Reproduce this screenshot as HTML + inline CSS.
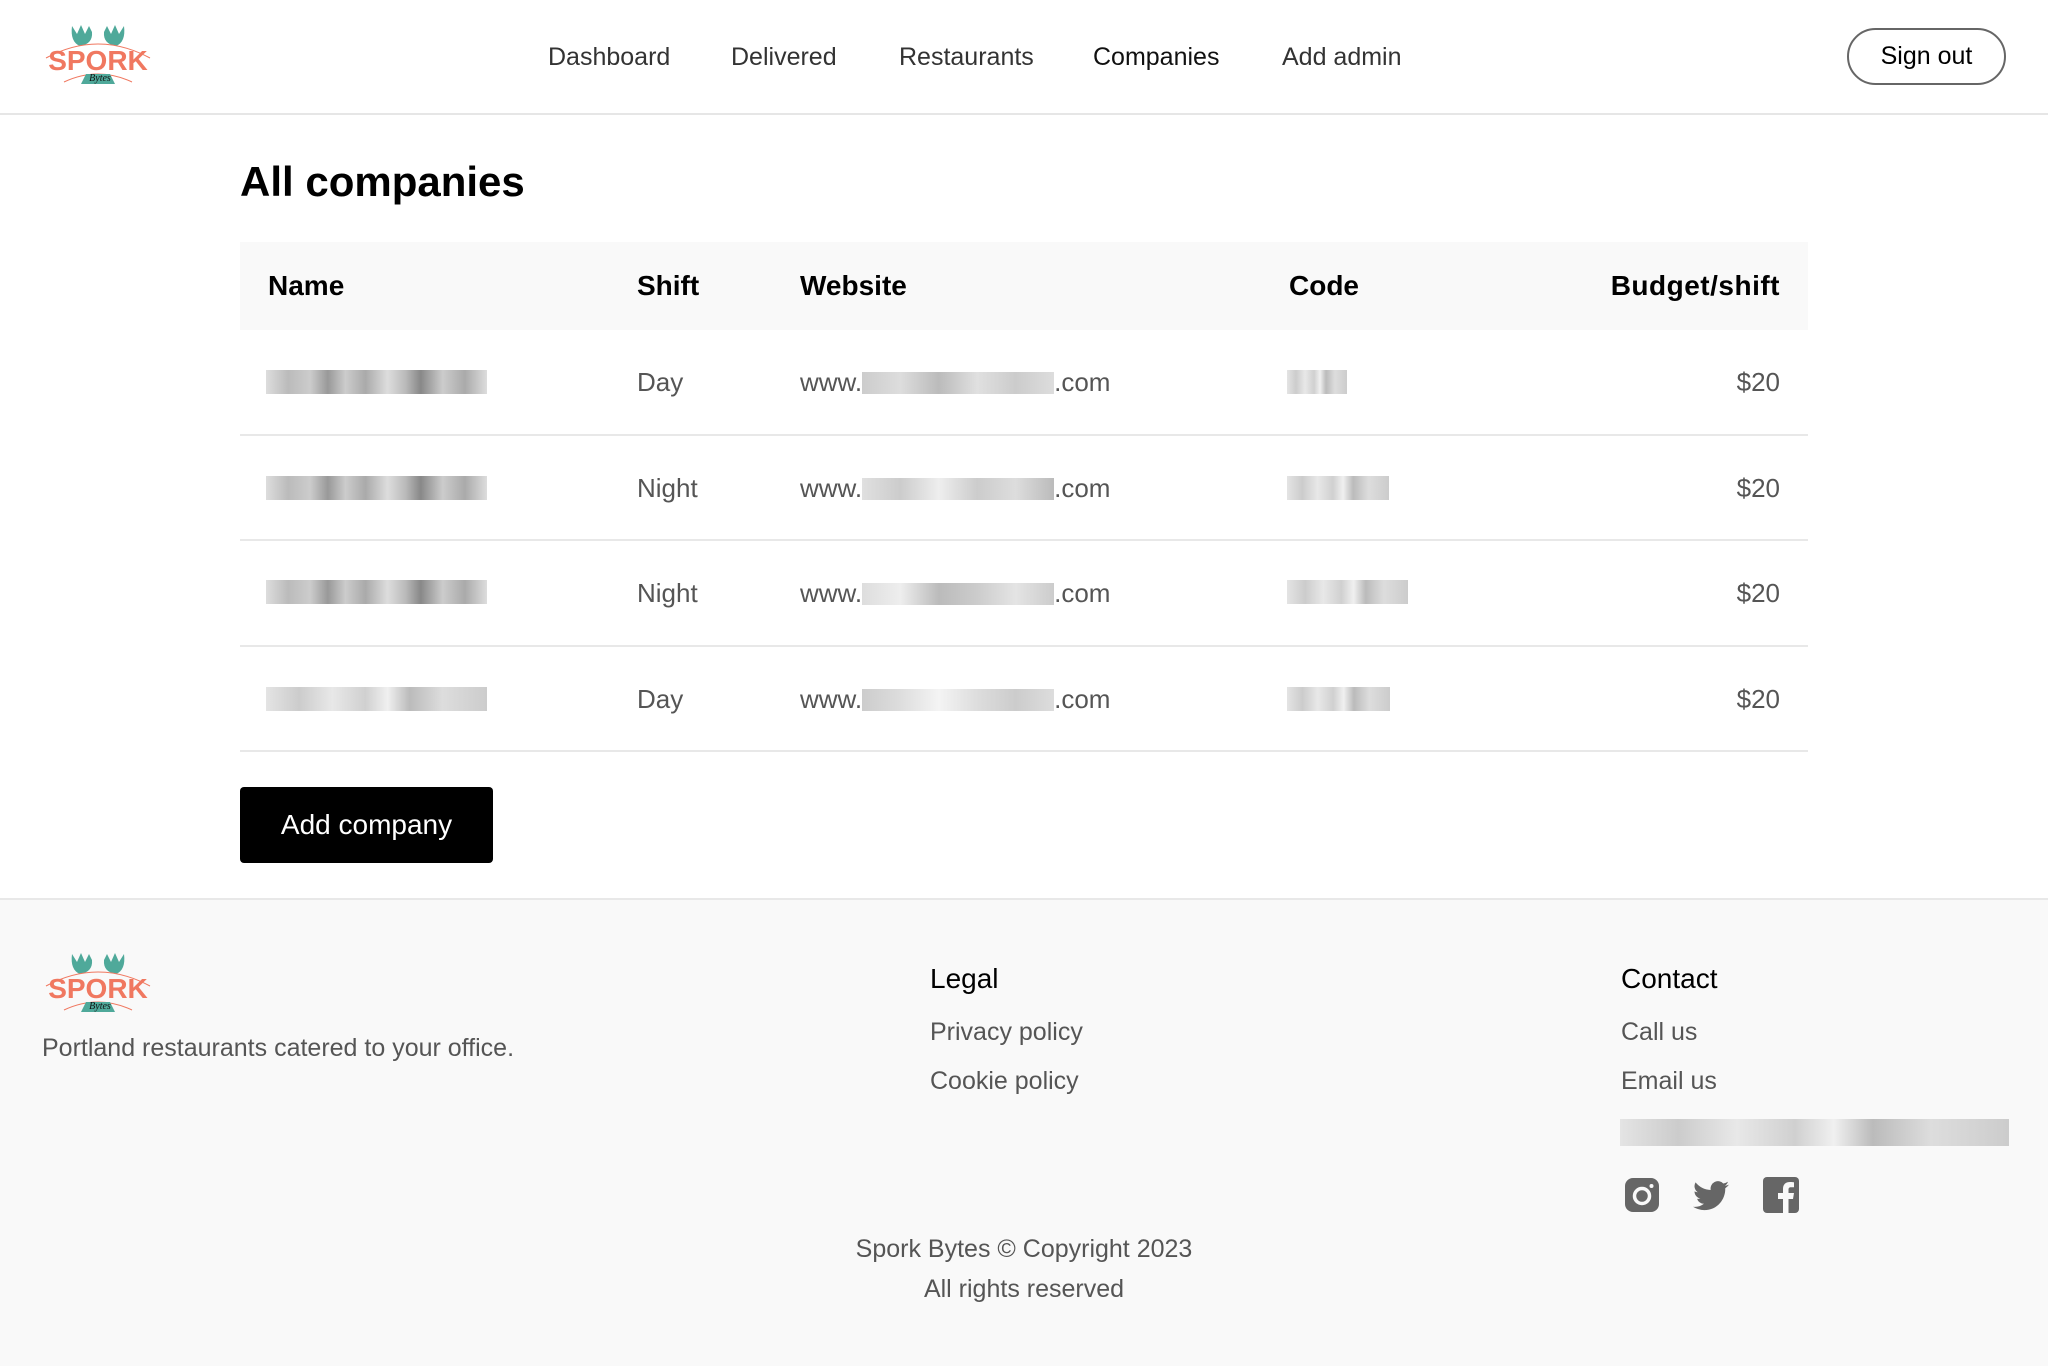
<!DOCTYPE html>
<html><head><meta charset="utf-8">
<style>
*{margin:0;padding:0;box-sizing:border-box}
body{width:2048px;height:1366px;position:relative;background:#fff;font-family:"Liberation Sans",sans-serif;overflow:hidden}
.a{position:absolute;white-space:nowrap;line-height:40px}
.nav{font-size:25px;color:#333;top:37px}
.th{font-size:28px;font-weight:bold;color:#000}
.td{font-size:26px;color:#555}
.bl{position:absolute;height:24px;background:linear-gradient(90deg,#ddd 0,#bbb 10%,#ccc 20%,#999 28%,#ccc 36%,#aaa 45%,#ddd 55%,#bbb 63%,#888 70%,#ccc 80%,#aaa 90%,#ddd 100%)}
.bl2{background:linear-gradient(90deg,#e4e4e4 0,#ccc 15%,#e8e8e8 30%,#d0d0d0 45%,#f0f0f0 55%,#bbb 65%,#ddd 80%,#ccc 100%)}
.line{position:absolute;left:240px;width:1568px;height:2px;background:#e8e8e8}
.fl{font-size:25px;color:#555}
</style></head><body>

<svg style="position:absolute;left:44px;top:24px" width="108" height="64" viewBox="0 0 108 64">
<path d="M28 2 l5 8 l4 -9 l4 9 l4 -8 l3 6 q1 12 -12 14 q-10 -4 -8 -20z" fill="#4fa99a"/>
<path d="M80 2 l-5 8 l-4 -9 l-4 9 l-4 -8 l-3 6 q-1 12 12 14 q10 -4 8 -20z" fill="#4fa99a"/>
<path d="M2 34 Q54 6 106 34" stroke="#f07860" stroke-width="1" fill="none"/>
<path d="M20 58 Q54 42 88 58" stroke="#f07860" stroke-width="1" fill="none"/>
<path d="M42 50 h24 l5 10 h-34z" fill="#4fa99a"/>
<text x="54" y="46" text-anchor="middle" font-family="Liberation Sans Narrow, Liberation Sans" font-weight="bold" font-size="28" fill="#f07860">SPORK</text>
<text x="56" y="57" text-anchor="middle" font-family="Liberation Serif" font-style="italic" font-size="10" fill="#111">Bytes</text>
</svg>

<div class="a nav" style="left:548px">Dashboard</div>
<div class="a nav" style="left:731px">Delivered</div>
<div class="a nav" style="left:899px">Restaurants</div>
<div class="a nav" style="left:1093px;color:#111">Companies</div>
<div class="a nav" style="left:1282px">Add admin</div>
<div style="position:absolute;left:1847px;top:28px;width:159px;height:57px;border:2px solid #666;border-radius:29px;font-size:25px;line-height:53px;text-align:center;color:#000">Sign out</div>
<div style="position:absolute;left:0;top:113px;width:2048px;height:2px;background:#e6e6e6"></div>

<div class="a" style="left:240px;top:154px;font-size:42px;font-weight:bold;line-height:56px;color:#000">All companies</div>

<div style="position:absolute;left:240px;top:242px;width:1568px;height:88px;background:#f9f9f9"></div>
<div class="a th" style="left:268px;top:266px">Name</div>
<div class="a th" style="left:637px;top:266px">Shift</div>
<div class="a th" style="left:800px;top:266px">Website</div>
<div class="a th" style="left:1289px;top:266px">Code</div>
<div class="a th" style="right:268px;top:266px;letter-spacing:0.5px">Budget/shift</div>

<div class="bl" style="left:266px;top:370px;width:221px"></div>
<div class="a td" style="left:637px;top:362px">Day</div>
<div class="a td" style="left:800px;top:362px">www.<span style="display:inline-block;width:192px;height:22px;vertical-align:-3px;background:linear-gradient(90deg,#ccc,#ddd,#bbb,#e0e0e0,#ccc,#ddd)"></span>.com</div>
<div class="bl bl2" style="left:1287px;top:370px;width:60px"></div>
<div class="a td" style="right:268px;top:362px">$20</div>
<div class="line" style="top:434px"></div>

<div class="bl" style="left:266px;top:476px;width:221px"></div>
<div class="a td" style="left:637px;top:468px">Night</div>
<div class="a td" style="left:800px;top:468px">www.<span style="display:inline-block;width:192px;height:22px;vertical-align:-3px;background:linear-gradient(90deg,#e0e0e0,#ccc,#eee,#ccc,#ddd,#bbb)"></span>.com</div>
<div class="bl bl2" style="left:1287px;top:476px;width:102px"></div>
<div class="a td" style="right:268px;top:468px">$20</div>
<div class="line" style="top:539px"></div>

<div class="bl" style="left:266px;top:580px;width:221px"></div>
<div class="a td" style="left:637px;top:573px">Night</div>
<div class="a td" style="left:800px;top:573px">www.<span style="display:inline-block;width:192px;height:22px;vertical-align:-3px;background:linear-gradient(90deg,#ddd,#eee,#bbb,#ccc,#e4e4e4,#ccc)"></span>.com</div>
<div class="bl bl2" style="left:1287px;top:580px;width:121px"></div>
<div class="a td" style="right:268px;top:573px">$20</div>
<div class="line" style="top:645px"></div>

<div class="bl bl2" style="left:266px;top:687px;width:221px"></div>
<div class="a td" style="left:637px;top:679px">Day</div>
<div class="a td" style="left:800px;top:679px">www.<span style="display:inline-block;width:192px;height:22px;vertical-align:-3px;background:linear-gradient(90deg,#ccc,#ddd,#f4f4f4,#ddd,#ccc,#ddd)"></span>.com</div>
<div class="bl bl2" style="left:1287px;top:687px;width:103px"></div>
<div class="a td" style="right:268px;top:679px">$20</div>
<div class="line" style="top:750px"></div>

<div style="position:absolute;left:240px;top:787px;width:253px;height:76px;background:#000;border-radius:4px;color:#fff;font-size:28px;line-height:76px;text-align:center">Add company</div>

<div style="position:absolute;left:0;top:898px;width:2048px;height:468px;background:#f9f9f9;border-top:2px solid #e8e8e8"></div>
<svg style="position:absolute;left:44px;top:952px" width="108" height="64" viewBox="0 0 108 64">
<path d="M28 2 l5 8 l4 -9 l4 9 l4 -8 l3 6 q1 12 -12 14 q-10 -4 -8 -20z" fill="#4fa99a"/>
<path d="M80 2 l-5 8 l-4 -9 l-4 9 l-4 -8 l-3 6 q-1 12 12 14 q10 -4 8 -20z" fill="#4fa99a"/>
<path d="M2 34 Q54 6 106 34" stroke="#f07860" stroke-width="1" fill="none"/>
<path d="M20 58 Q54 42 88 58" stroke="#f07860" stroke-width="1" fill="none"/>
<path d="M42 50 h24 l5 10 h-34z" fill="#4fa99a"/>
<text x="54" y="46" text-anchor="middle" font-family="Liberation Sans Narrow, Liberation Sans" font-weight="bold" font-size="28" fill="#f07860">SPORK</text>
<text x="56" y="57" text-anchor="middle" font-family="Liberation Serif" font-style="italic" font-size="10" fill="#111">Bytes</text>
</svg>
<div class="a fl" style="left:42px;top:1028px">Portland restaurants catered to your office.</div>

<div class="a" style="left:930px;top:959px;font-size:28px;color:#000">Legal</div>
<div class="a fl" style="left:930px;top:1012px">Privacy policy</div>
<div class="a fl" style="left:930px;top:1061px">Cookie policy</div>

<div class="a" style="left:1621px;top:959px;font-size:28px;color:#000">Contact</div>
<div class="a fl" style="left:1621px;top:1012px">Call us</div>
<div class="a fl" style="left:1621px;top:1061px">Email us</div>
<div class="bl bl2" style="left:1620px;top:1119px;width:389px;height:27px"></div>

<svg style="position:absolute;left:1624px;top:1177px" width="36" height="36" viewBox="0 0 36 36"><rect x="1" y="1" width="34" height="34" rx="8" fill="#666"/><circle cx="18" cy="19" r="7.5" fill="none" stroke="#f9f9f9" stroke-width="3.5"/><circle cx="27.5" cy="9" r="2" fill="#f9f9f9"/></svg>
<svg style="position:absolute;left:1693px;top:1180px" width="36" height="32" viewBox="0 0 24 20"><path fill="#666" d="M24 2.4a9.8 9.8 0 0 1-2.8.8A4.9 4.9 0 0 0 23.3.5a9.9 9.9 0 0 1-3.1 1.2A4.9 4.9 0 0 0 11.8 6 14 14 0 0 1 1.7.9a4.9 4.9 0 0 0 1.5 6.6A4.9 4.9 0 0 1 1 6.9a4.9 4.9 0 0 0 3.900 4.8 4.9 4.9 0 0 1-2.2.1 4.9 4.9 0 0 0 4.6 3.4A9.9 9.9 0 0 1 0 17.2 14 14 0 0 0 7.5 19.4c9.1 0 14-7.5 14-14v-.6A10 10 0 0 0 24 2.4z"/></svg>
<svg style="position:absolute;left:1762px;top:1176px" width="38" height="38" viewBox="0 0 38 38"><rect x="1" y="1" width="36" height="36" rx="4" fill="#666"/><path d="M21 37V23h-5v-6h5v-4c0-5 3-7 7-7 2 0 3.5.2 4 .3v5h-3c-2 0-2.5 1-2.5 2.5V17h5.5l-1 6h-4.5v14z" fill="#f9f9f9"/></svg>

<div class="a fl" style="left:0;width:2048px;text-align:center;top:1229px">Spork Bytes © Copyright 2023</div>
<div class="a fl" style="left:0;width:2048px;text-align:center;top:1269px">All rights reserved</div>
</body></html>
